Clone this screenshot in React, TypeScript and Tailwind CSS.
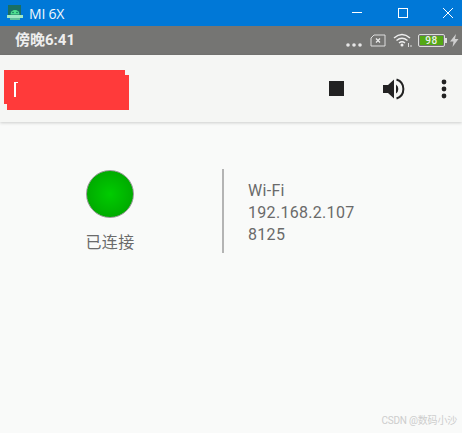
import React from "react";

const cjk = "font-['Roboto','Noto_Sans_CJK_SC',sans-serif]";

const AndroidLogo = () => (
  <svg width="16" height="16" viewBox="0 0 16 16" className="block">
    <rect x="1" y="0" width="13" height="13" fill="#1a6f63" />
    <path d="M3.5 9.5 A4.5 4.5 0 0 1 12.5 9.5 Z" fill="#4fe08f" />
    <rect x="0" y="10" width="16" height="3" fill="#9fe8c4" />
    <rect x="3" y="13" width="10" height="2" fill="#5fbf9a" />
    <circle cx="6" cy="7.5" r="0.8" fill="#1a6f63" />
    <circle cx="10" cy="7.5" r="0.8" fill="#1a6f63" />
  </svg>
);

const WindowControls = () => (
  <div className="flex items-center gap-[35px] pr-[9px]">
    <svg width="10" height="10" viewBox="0 0 10 10" className="mr-[1px]"><path d="M0 4.5H10" stroke="#fff" strokeWidth="1" /></svg>
    <svg width="10" height="10" viewBox="0 0 10 10"><rect x="0.5" y="0.5" width="9" height="9" fill="none" stroke="#fff" strokeWidth="1" /></svg>
    <svg width="10" height="10" viewBox="0 0 10 10"><path d="M0 0L10 10M10 0L0 10" stroke="#fff" strokeWidth="1" /></svg>
  </div>
);

const StatusIcons = () => (
  <div className="flex items-center pr-[3px]">
    <svg width="16" height="4" viewBox="0 0 16 4" className="mt-[8px] mr-[8px]">
      <circle cx="2" cy="2" r="1.8" fill="#e6e6e6" />
      <circle cx="8" cy="2" r="1.8" fill="#e6e6e6" />
      <circle cx="14" cy="2" r="1.8" fill="#e6e6e6" />
    </svg>
    <svg width="16" height="13" viewBox="0 0 16 13" className="mr-[7px]">
      <path d="M4 1H15V12H1V4Z" fill="none" stroke="#dedede" strokeWidth="1" />
      <path d="M6 4.5L10 8.5M10 4.5L6 8.5" stroke="#eee" strokeWidth="1.2" />
    </svg>
    <svg width="20" height="15" viewBox="0 0 20 15" className="mr-[5px]">
      <path d="M1 5Q9 -2 17 5M3.5 7.5Q9 3 14.5 7.5M6 10Q9 7.5 12 10" fill="none" stroke="#eee" strokeWidth="1.5" />
      <circle cx="9" cy="12" r="1.5" fill="#eee" />
      <path d="M15.5 10V14M18 12V14" stroke="#ddd" strokeWidth="1" />
    </svg>
    <div className="flex items-center mr-[3px]">
      <div className="w-[27px] h-[13px] rounded-[2px] border border-[#dcdcdc] p-[1px] flex">
        <div className="flex-1 bg-[#54a814] text-[#eee] text-[10px] leading-[9px] text-center font-['Roboto',sans-serif] font-medium tracking-[0.5px]">98</div>
      </div>
      <div className="w-[2px] h-[5px] bg-[#dcdcdc]" />
    </div>
    <svg width="9" height="13" viewBox="0 0 9 13"><path d="M6 0L0 7.5H3.5L2.5 13L8.5 5H5Z" fill="#cfcfcf" /></svg>
  </div>
);

export default function App() {
  return (
    <div className={`w-[462px] h-[433px] flex flex-col bg-[#f9faf9] overflow-hidden relative ${cjk}`}>
      <div className="h-[26px] bg-[#0078d7] flex items-center justify-between">
        <div className="flex items-center pl-[7px] gap-[6px] text-[#f2f8fd] text-[14px]">
          <AndroidLogo />
          <span className="font-['Open_Sans',sans-serif] tracking-[-0.2px]">MI 6X</span>
        </div>
        <WindowControls />
      </div>

      <div className="h-[29px] bg-[#757573] flex items-center justify-between pl-[15px]">
        <span className="text-[#eeeeee] text-[15px] font-bold">傍晚6:41</span>
        <StatusIcons />
      </div>

      <div className="h-[67px] bg-[#f5f6f4] shadow-[0_1px_3px_rgba(0,0,0,0.18)] flex items-center justify-between pr-[15px] relative">
        <div className="relative ml-[4px] -mt-[3px] w-[121px] h-[34px] bg-[#ff3a3a]">
          <div className="absolute left-[3px] top-[5px] w-[122px] h-[35px] bg-[#ff3a3a]" />
          <div className="absolute left-[10px] top-[12px] w-[4px] h-[15px] border-l-2 border-t border-white" />
        </div>
        <div className="flex items-center">
          <div className="w-[15px] h-[15px] bg-[#222222] mr-[38px]" />
          <svg width="24" height="24" viewBox="0 0 24 24" className="mr-[35px]">
            <path d="M1 8H6L12 2.5V21.5L6 16H1Z" fill="#222" />
            <path d="M14 7.5A5.5 5.5 0 0 1 14 16.5Z" fill="#222" />
            <path d="M14.5 2.5A10 10 0 0 1 14.5 21.5" fill="none" stroke="#222" strokeWidth="2" />
          </svg>
          <svg width="6" height="20" viewBox="0 0 6 20">
            <circle cx="3" cy="3" r="2.4" fill="#222" />
            <circle cx="3" cy="10" r="2.4" fill="#222" />
            <circle cx="3" cy="17" r="2.4" fill="#222" />
          </svg>
        </div>
      </div>

      <div className="flex items-stretch mt-[47px] h-[84px]">
        <div className="w-[220px] mr-[2px] flex flex-col items-center">
          <div className="w-[48px] h-[48px] shrink-0 rounded-full border border-[#9a9a9a] bg-[radial-gradient(circle,#00cc00_0%,#009e00_100%)] mt-[1px]" />
          <span className="text-[#6a6a6a] text-[16px] mt-[15px] leading-[20px] tracking-[0.3px]">已连接</span>
        </div>
        <div className="w-[2px] bg-[#b4b4b4]" />
        <div className="flex flex-col pl-[24px] pt-[11px] text-[#6a6a6a] text-[16px] leading-[22px] tracking-[0.3px]">
          <span>Wi-Fi</span>
          <span>192.168.2.107</span>
          <span>8125</span>
        </div>
      </div>

      <span className="absolute right-[5px] bottom-[5px] text-[#cdcdcd] text-[10px] leading-[14px] tracking-[-0.2px]">CSDN @数码小沙</span>
    </div>
  );
}
